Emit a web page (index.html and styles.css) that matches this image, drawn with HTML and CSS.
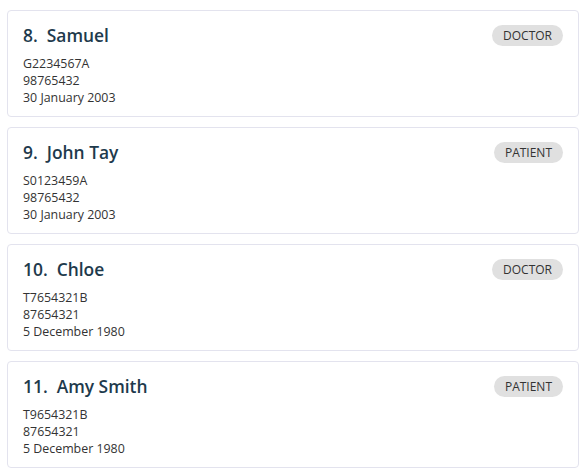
FILE: index.html
```html
<!DOCTYPE html>
<html>
<head>
<meta charset="utf-8">
<link rel="stylesheet" href="styles.css">
</head>
<body>
<div class="list">
  <div class="card">
    <div class="head"><span class="name">8.&nbsp; Samuel</span><span class="tag">DOCTOR</span></div>
    <div class="details"><div>G2234567A</div><div>98765432</div><div>30 January 2003</div></div>
  </div>
  <div class="card">
    <div class="head"><span class="name">9.&nbsp; John Tay</span><span class="tag">PATIENT</span></div>
    <div class="details"><div>S0123459A</div><div>98765432</div><div>30 January 2003</div></div>
  </div>
  <div class="card">
    <div class="head"><span class="name">10.&nbsp; Chloe</span><span class="tag">DOCTOR</span></div>
    <div class="details"><div>T7654321B</div><div>87654321</div><div>5 December 1980</div></div>
  </div>
  <div class="card">
    <div class="head"><span class="name">11.&nbsp; Amy Smith</span><span class="tag">PATIENT</span></div>
    <div class="details"><div>T9654321B</div><div>87654321</div><div>5 December 1980</div></div>
  </div>
</div>
</body>
</html>
```
FILE: styles.css
```css
html, body { margin: 0; background: #ffffff; }
body {
  padding: 10px 6px 0 7px;
  font-family: "Open Sans", "Noto Sans", sans-serif;
}
.list { display: flex; flex-direction: column; gap: 10px; width: 572px; }
.card {
  border: 1px solid #e3e3ee;
  border-radius: 4px;
  padding: 12px 15px 10px 15px;
  height: 107px;
  box-sizing: border-box;
}
.head { display: flex; justify-content: space-between; align-items: center; height: 24px; }
.name { font-size: 17.4px; font-weight: 600; color: #1e3a4c; line-height: 24px; }
.tag {
  background: #e0e0e0;
  color: #333;
  font-size: 12px;
  border-radius: 11px;
  height: 21px;
  line-height: 21px;
  padding: 0 11px;
}
.details { margin-top: 8px; font-size: 12.4px; line-height: 17px; color: #333; }
```
